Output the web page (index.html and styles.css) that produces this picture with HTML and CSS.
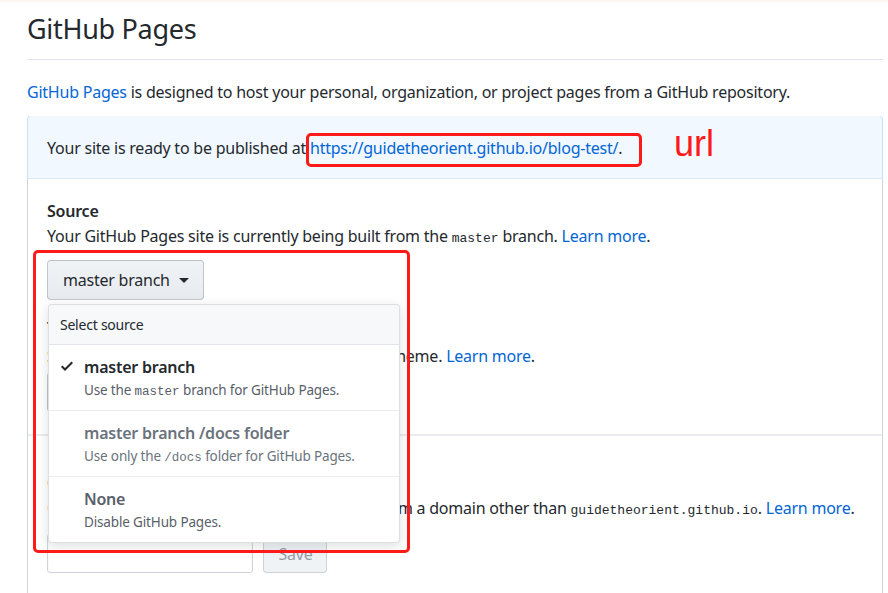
FILE: index.html
```html
<!DOCTYPE html>
<html>
<head>
<meta charset="utf-8">
<link rel="stylesheet" href="styles.css">
</head>
<body>
<div class="topbar"></div>
<div class="page">
  <h2 class="subhead">GitHub Pages</h2>
  <p class="intro"><a href="#">GitHub Pages</a> is designed to host your personal, organization, or project pages from a GitHub repository.</p>

  <div class="box">
    <div class="flash">Your site is ready to be published at <a href="#" class="url-link">https://guidetheorient.github.io/blog-test/</a>.</div>

    <div class="section">
      <div class="group">
        <div class="label">Source</div>
        <div class="note">Your GitHub Pages site is currently being built from the <code>master</code> branch. <a href="#">Learn more</a>.</div>
        <div class="select-wrap">
          <button class="btn">master branch <span class="caret"></span></button>
          <div class="menu">
            <div class="menu-header">Select source</div>
            <div class="menu-item">
              <svg class="check" width="14" height="16" viewBox="0 0 12 16"><path fill="#24292e" fill-rule="evenodd" d="M12 5l-8 8-4-4 1.5-1.5L4 10l6.5-6.5L12 5z"/></svg>
              <div class="item-title">master branch</div>
              <div class="item-desc">Use the <code>master</code> branch for GitHub Pages.</div>
            </div>
            <div class="menu-item disabled">
              <div class="item-title">master branch /docs folder</div>
              <div class="item-desc">Use only the <code>/docs</code> folder for GitHub Pages.</div>
            </div>
            <div class="menu-item none">
              <div class="item-title">None</div>
              <div class="item-desc">Disable GitHub Pages.</div>
            </div>
          </div>
        </div>
      </div>
      <div class="group theme">
        <div class="label">Theme chooser</div>
        <div class="note">Select a theme to publish your site with a Jekyll theme. <a href="#">Learn more</a>.</div>
        <div class="btn-row"><button class="btn">Choose a theme</button></div>
      </div>
    </div>

    <div class="section">
      <div class="label">Custom domain</div>
      <div class="note">Custom domain allows you to serve your site from a domain other than <code>guidetheorient.github.io</code>. <a href="#">Learn more</a>.</div>
      <div class="domain-row">
        <input class="input" type="text">
        <button class="btn save" disabled>Save</button>
      </div>
    </div>
  </div>

  <div class="mark mark-url"></div>
  <div class="mark-label">url</div>
  <div class="mark mark-menu"></div>
</div>
</body>
</html>
```
FILE: styles.css
```css
* { box-sizing: border-box; }
html, body { margin: 0; padding: 0; background: #fff; }
body {
  font-family: "Noto Sans", "Open Sans", sans-serif;
  font-size: 16px;
  line-height: 24px;
  color: #24292e;
  letter-spacing: -0.23px;
}
a { color: #0366d6; text-decoration: none; }
code {
  font-family: "Liberation Mono", "DejaVu Sans Mono", monospace;
  font-size: 13px;
  line-height: 1;
  letter-spacing: 0;
}
.topbar { height: 2px; background: #fbf8f1; }
.page {
  position: relative;
  margin-left: 27px;
  width: 856px;
  padding-top: 10px;
}
.subhead {
  margin: 0;
  padding-bottom: 13px;
  font-size: 27px;
  font-weight: 400;
  line-height: 34px;
  letter-spacing: -0.3px;
  border-bottom: 1px solid #e1e4e8;
}
.intro { margin: 20px 0 0; }
.box {
  margin-top: 12px;
  border: 1px solid #d1d5da;
  border-top-color: #c8e1ff;
  border-radius: 4px 4px 0 0;
  height: 500px;
}
.flash {
  background: #f1f8ff;
  border-bottom: 1px solid #d8e6f5;
  padding: 20px 19px 18px;
  border-radius: 4px 4px 0 0;
  height: 63px;
  margin: -1px -1px 0;
  border-left: 1px solid #c8e1ff;
  border-right: 1px solid #c8e1ff;
}
.section {
  padding: 20px 19px 22px;
}
.section + .section { border-top: 2px solid #eaecef; padding-top: 35px; }
.label { font-weight: 600; }
.note { margin-top: 1px; }
.select-wrap { position: relative; margin-top: 12px; display: flex; }
.btn-row { display: flex; margin-top: 4px; }
.btn {
  font-family: inherit;
  font-size: 16px;
  letter-spacing: -0.23px;
  color: #24292e;
  height: 40px;
  padding: 0 14px 0 15px;
  background: linear-gradient(#f0f3f6, #e7ebef);
  border: 1px solid rgba(27,31,35,0.2);
  border-radius: 4px;
  display: flex;
  align-items: center;
  gap: 8px;
}
.caret {
  display: inline-block;
  width: 0; height: 0;
  border-left: 5px solid transparent;
  border-right: 5px solid transparent;
  border-top: 5px solid #24292e;
  margin-left: 1px;
}
.menu {
  position: absolute;
  top: 44px;
  left: 1px;
  width: 352px;
  background: #fff;
  border: 1px solid rgba(27,31,35,0.15);
  border-radius: 4px;
  box-shadow: 0 3px 12px rgba(27,31,35,0.15);
  z-index: 5;
}
.menu-header {
  height: 40px;
  padding: 0 11px;
  display: flex;
  align-items: center;
  font-size: 14px;
  color: #24292e;
  background: #f6f8fa;
  border-bottom: 1px solid #e1e4e8;
  border-radius: 4px 4px 0 0;
}
.menu-item {
  position: relative;
  height: 66px;
  padding: 11px 12px 0 35px;
  border-bottom: 1px solid #eaecef;
}
.menu-item:last-child { border-bottom: 0; height: 65px; }
.check { position: absolute; left: 11px; top: 13px; }
.item-title { font-weight: 600; line-height: 22px; }
.item-desc { margin-top: 1px; font-size: 13.5px; line-height: 22px; color: #586069; letter-spacing: -0.15px; }
.item-desc code { font-size: 12.5px; }
.disabled .item-title { color: #6a737d; }
.disabled .item-desc { color: #6a737d; }
.none .item-title { color: #586069; }
.theme { margin-top: 16px; }
.theme .note { margin-top: 4px; }
.domain-row { display: flex; gap: 10px; margin-top: 14px; }
.input {
  width: 206px;
  height: 39px;
  border: 1px solid #d1d5da;
  border-radius: 3px;
  box-shadow: inset 0 1px 2px rgba(27,31,35,0.075);
}
.save {
  height: 39px;
  width: 64px;
  justify-content: center;
  color: #959da5;
  background: #eff3f6;
  border-color: rgba(27,31,35,0.15);
}
.mark {
  position: absolute;
  border: 3px solid #ff1a1a;
  border-radius: 5px;
  z-index: 10;
  pointer-events: none;
}
.mark-url { left: 279px; top: 131px; width: 336px; height: 34px; }
.mark-menu { left: 6px; top: 248px; width: 377px; height: 303px; }
.mark-label {
  position: absolute;
  left: 647px;
  top: 122px;
  font-family: "Liberation Sans", Arial, sans-serif;
  font-size: 36px;
  line-height: 40px;
  letter-spacing: 0;
  color: #ff1a1a;
  z-index: 10;
}
```
